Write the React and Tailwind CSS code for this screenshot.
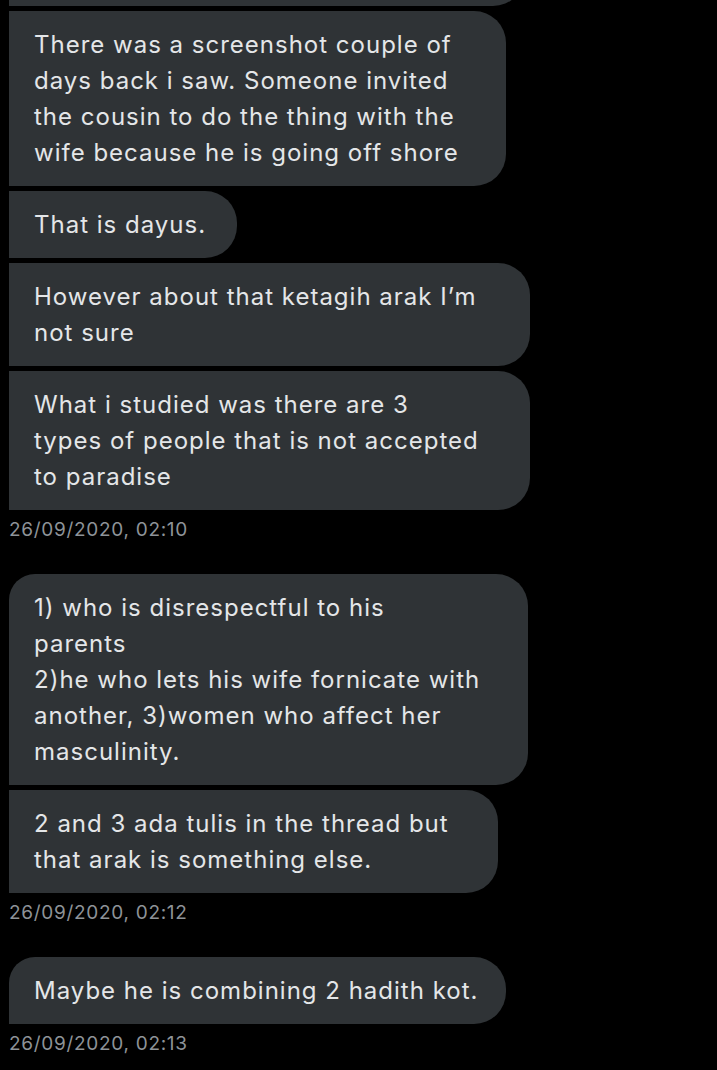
import React from "react";

const font = { fontFamily: "Inter, 'Noto Sans', 'Liberation Sans', sans-serif" };

function Bubble({ lines, w, first }) {
  return (
    <div
      className={`${w} bg-[#2f3336] text-[#e4e6e8] text-[24px] leading-[36px] tracking-[1px] pl-[25px] pt-[16px] pb-[15px] rounded-r-[32px] ${first ? "rounded-tl-[26px]" : ""}`}
    >
      {lines.map((l, i) => (
        <div key={i} className="whitespace-nowrap">{l}</div>
      ))}
    </div>
  );
}

function Stamp({ children, mb }) {
  return (
    <div className={`text-[#8e9398] text-[19px] leading-[24px] tracking-[0.7px] pt-[8px] ${mb}`}>{children}</div>
  );
}

export default function App() {
  return (
    <div className="w-[717px] h-[1070px] bg-black overflow-hidden pl-[9px]" style={font}>
      <div className="w-[516px] h-[40px] -mt-[34px] bg-[#2f3336] rounded-br-[32px]" />
      <div className="flex flex-col gap-[5px] mt-[5px]">
        <Bubble
          w="w-[497px]"
          lines={[
            "There was a screenshot couple of",
            "days back i saw. Someone invited",
            "the cousin to do the thing with the",
            "wife because he is going off shore",
          ]}
        />
        <Bubble w="w-[228px]" lines={["That is dayus."]} />
        <Bubble w="w-[521px]" lines={["However about that ketagih arak I’m", "not sure"]} />
        <Bubble
          w="w-[521px]"
          lines={[
            "What i studied was there are 3",
            "types of people that is not accepted",
            "to paradise",
          ]}
        />
      </div>
      <Stamp mb="mb-[32px]">26/09/2020, 02:10</Stamp>
      <div className="flex flex-col gap-[5px]">
        <Bubble
          first
          w="w-[519px]"
          lines={[
            "1) who is disrespectful to his",
            "parents",
            "2)he who lets his wife fornicate with",
            "another, 3)women who affect her",
            "masculinity.",
          ]}
        />
        <Bubble
          w="w-[489px]"
          lines={["2 and 3 ada tulis in the thread but", "that arak is something else."]}
        />
      </div>
      <Stamp mb="mb-[32px]">26/09/2020, 02:12</Stamp>
      <Bubble first w="w-[497px]" lines={["Maybe he is combining 2 hadith kot."]} />
      <Stamp mb="">26/09/2020, 02:13</Stamp>
    </div>
  );
}
